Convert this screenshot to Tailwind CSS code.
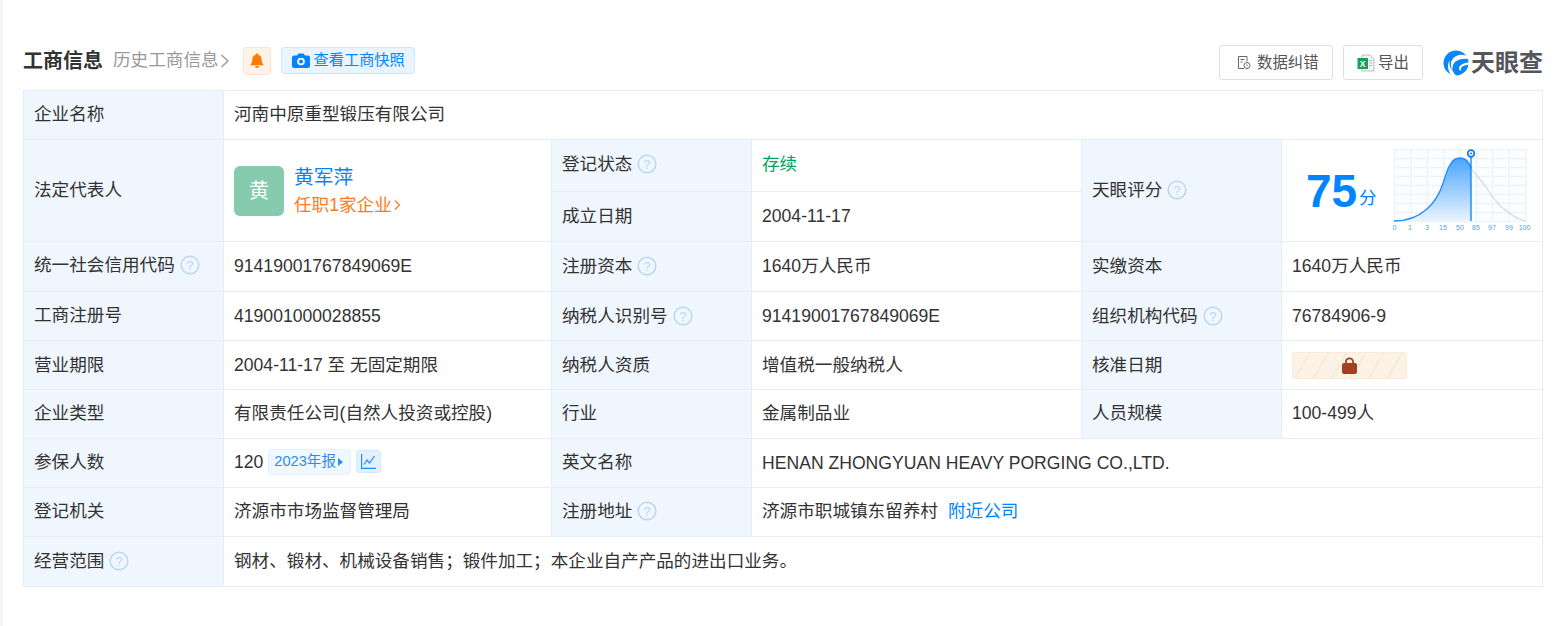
<!DOCTYPE html>
<html lang="zh-CN">
  <head>
    <meta charset="UTF-8" />
    <title>工商信息</title>
    <script src="https://cdn.jsdelivr.net/npm/@tailwindcss/browser@4"></script>
  </head>
  <body class="bg-white font-['Liberation_Sans','Noto_Sans_CJK_SC',sans-serif] text-[17.6px] text-[#333]">
    <div class="h-[626px] overflow-hidden border-l-[3px] border-[#f5f5f5] pl-[20px] pr-[18px] pt-[44px]">
      <!-- header -->
      <div class="flex items-center justify-between h-[37px] mb-[9px]">
        <div class="flex items-center mb-[4px]">
          <span class="text-[20px] font-bold text-[#333]">工商信息</span>
          <span class="ml-[10px] text-[#999]">历史工商信息</span>
          <svg class="ml-[1px]" width="10" height="16" viewBox="0 0 10 16" fill="none" stroke="#999" stroke-width="1.4"><path d="M1.5 2l6.5 6-6.5 6"/></svg>
          <div class="ml-[13px] w-[28px] h-[28px] flex items-center justify-center rounded-[3px] bg-[#fff3e8] border border-[#ffe3cf]">
            <svg width="14" height="15" viewBox="0 0 14 15" fill="#ff7a00"><path d="M7 0.5c.8 0 1.3.5 1.3 1.2C10.500 2.300 11.600 4 11.600 6.200c0 2.600.5 3.900 1.900 5.300v.8H.5v-.8C1.900 10.100 2.400 8.800 2.400 6.200 2.400 4 3.500 2.300 5.700 1.700 5.700 1 6.200.5 7 .5z"/><path d="M5 13h4a2 2 0 0 1-4 0z"/></svg>
          </div>
          <div class="ml-[10px] h-[27px] w-[134px] flex items-center pl-[10px] rounded-[3px] bg-[#e9f4ff] border border-[#cfe6ff] text-[15.2px] text-[#0084ff]">
            <svg width="18" height="15" viewBox="0 0 18 15"><path fill="#0084ff" d="M2 2.500h3L6.500.5h5L13 2.500h3a2 2 0 0 1 2 2V13a2 2 0 0 1-2 2H2a2 2 0 0 1-2-2V4.500a2 2 0 0 1 2-2z"/><circle cx="9" cy="8.500" r="3.800" fill="#fff"/><circle cx="9" cy="8.500" r="2" fill="#0084ff"/></svg>
            <span class="ml-[4px]">查看工商快照</span>
          </div>
        </div>
        <div class="flex items-center">
          <div class="w-[114px] h-[35px] flex items-center pl-[17px] rounded-[3px] border border-[#dddfe3] text-[15.4px] text-[#555]">
            <svg width="14" height="15" viewBox="0 0 14 15" fill="none" stroke="#666" stroke-width="1"><path d="M7 13.500H1.500v-12h8.500v5"/><path d="M3.500 4.500h4M3.500 7h2"/><circle cx="10" cy="10.500" r="3"/><path d="M10 9.500v1.500M10 12v.2"/></svg>
            <span class="ml-[6px]">数据纠错</span>
          </div>
          <div class="ml-[10px] w-[80px] h-[35px] flex items-center pl-[13px] rounded-[3px] border border-[#dddfe3] text-[15.4px] text-[#555]">
            <svg width="18" height="18" viewBox="0 0 18 18"><path d="M5 1h8l4 4v12H5z" fill="#f4f5f6" stroke="#b9bec4"/><path d="M12 6.500h3.500M12 9h3.500M12 11.500h3.500" stroke="#b9bec4"/><rect x="0.500" y="4" width="10.500" height="11" fill="#1d9d5b"/><text x="5.700" y="12.700" text-anchor="middle" font-size="8.500" font-weight="700" fill="#fff">X</text></svg>
            <span class="ml-[3px]">导出</span>
          </div>
          <div class="ml-[20px] w-[100px] flex items-center">
            <svg width="26" height="26" viewBox="0 0 26 26"><circle cx="13" cy="13" r="12.500" fill="#0a87f5"/><path d="M26 7C19 2.500 11 5 8.500 11 6.800 15.500 8.500 21.500 13.500 26c-2 .3-3.500 0-4.500-.5C5 22 3.800 15 6.500 10.500 6 15 7.200 18 9.500 20.500 8.500 13 14 7.500 26 9z" fill="#fff"/><path d="M26 12.500c-4 0-8 1.500-9.800 4.500-1 2 0 3.500 2.300 3.700C16.500 18.500 18.500 15.500 26 14.500z" fill="#fff"/></svg>
            <span class="ml-[2px] text-[24px] leading-none font-bold text-[#53565c]">天眼查</span>
          </div>
        </div>
      </div>

      <!-- table -->
      <table class="table-fixed w-[1520px] border-collapse">
        <colgroup>
          <col class="w-[200px]" /><col class="w-[328px]" /><col class="w-[200px]" /><col class="w-[330px]" /><col class="w-[200px]" /><col class="w-[261px]" />
        </colgroup>
        <tbody>
          <tr class="h-[49px]">
            <td class="border border-[#e4eef6] bg-[#eff6fd] px-[10px] pb-[2px]">企业名称</td>
            <td colspan="5" class="border border-[#e4eef6] px-[10px] pb-[2px]">河南中原重型锻压有限公司</td>
          </tr>
          <tr class="h-[52px]">
            <td rowspan="2" class="border border-[#e4eef6] bg-[#eff6fd] px-[10px]">法定代表人</td>
            <td rowspan="2" class="border border-[#e4eef6] px-[10px]">
              <div class="flex items-center">
                <div class="w-[50px] h-[50px] rounded-[6px] bg-[#86cbad] flex items-center justify-center text-[20px] text-white">黄</div>
                <div class="ml-[10px]">
                  <div class="text-[19.800px] leading-[26px] text-[#0084ff]">黄军萍</div>
                  <div class="mt-[3px] flex items-center leading-[24px] text-[#ff7a1a]">任职1家企业
                    <svg class="ml-[2px]" width="7" height="12" viewBox="0 0 7 12" fill="none" stroke="#ff7a1a" stroke-width="1.200"><path d="M1 1.500l4.500 4.500-4.500 4.500"/></svg>
                  </div>
                </div>
              </div>
            </td>
            <td class="border border-[#e4eef6] bg-[#eff6fd] px-[10px] pb-[2px]">
              <div class="flex items-center">登记状态
                <svg class="ml-[5px]" width="20" height="20" viewBox="0 0 20 20"><circle cx="10" cy="10" r="8.800" fill="none" stroke="#b9d7f1" stroke-width="1.500"/><text x="10" y="14.500" text-anchor="middle" font-size="12.500" fill="#b9d7f1">?</text></svg>
              </div>
            </td>
            <td class="border border-[#e4eef6] px-[10px] pb-[2px] text-[#00a35c]">存续</td>
            <td rowspan="2" class="border border-[#e4eef6] bg-[#eff6fd] px-[10px]">
              <div class="flex items-center">天眼评分
                <svg class="ml-[5px]" width="20" height="20" viewBox="0 0 20 20"><circle cx="10" cy="10" r="8.800" fill="none" stroke="#b9d7f1" stroke-width="1.500"/><text x="10" y="14.500" text-anchor="middle" font-size="12.500" fill="#b9d7f1">?</text></svg>
              </div>
            </td>
            <td rowspan="2" class="border border-[#e4eef6] pl-[24px]">
              <div class="flex items-center">
                <span class="w-[53px] text-[46px] leading-none font-bold text-[#0084ff]">75</span>
                <span class="mt-[16px] text-[#0084ff]">分</span>
                <svg class="ml-[17px] overflow-visible" width="136" height="84" viewBox="0 0 136 84">
                  <defs>
                    <linearGradient id="fillArea" x1="0" y1="0" x2="0" y2="1"><stop offset="0" stop-color="#4aa5ff"/><stop offset="1" stop-color="#eaf4ff"/></linearGradient>
                  </defs>
                  <rect x="0.500" y="0.500" width="131.500" height="72" fill="#fcfdff" stroke="#ebf2fa" stroke-width="1.300"/>
                  <path d="M17 0.500v72M33.500 0.500v72M50 0.500v72M66 0.500v72M82.500 0.500v72M98.500 0.500v72M115 0.500v72M0 9.500h132M0 18.500h132M0 27.500h132M0 36.500h132M0 45.500h132M0 54.500h132M0 63.500h132" stroke="#ebf2fa" stroke-width="1.300" fill="none"/>
                  <path d="M77 19C81 25 87 31 92 38 97 46 102 54 110 60 117 66 124 71 132 72" fill="none" stroke="#ced9e3" stroke-width="1.200"/>
                  <path d="M0 72C14 72 24 68 33 60 41 53 46 44 49.500 33 54 17 58 9 66 9 71 9 75 13 77 19V72z" fill="url(#fillArea)"/>
                  <path d="M0 72C14 72 24 68 33 60 41 53 46 44 49.500 33 54 17 58 9 66 9 71 9 75 13 77 19" fill="none" stroke="#1a8cff" stroke-width="1.300"/>
                  <path d="M77 8V72" stroke="#0d7fec" stroke-width="1.300"/>
                  <circle cx="77" cy="4.500" r="3.300" fill="#fff" stroke="#0d7fec" stroke-width="1.700"/>
                  <circle cx="77" cy="4.500" r="1.100" fill="#0d7fec"/>
                  <g font-size="7" fill="#4f9ff0" text-anchor="middle">
                    <text x="0.500" y="80.500">0</text><text x="16" y="80.500">1</text><text x="33" y="80.500">3</text><text x="49" y="80.500">15</text><text x="66" y="80.500">50</text><text x="82" y="80.500">85</text><text x="98" y="80.500">97</text><text x="115" y="80.500">99</text><text x="130.500" y="80.500">100</text>
                  </g>
                </svg>
              </div>
            </td>
          </tr>
          <tr class="h-[50px]">
            <td class="border border-[#e4eef6] bg-[#eff6fd] px-[10px]">成立日期</td>
            <td class="border border-[#e4eef6] px-[10px]">2004-11-17</td>
          </tr>
          <tr class="h-[50px]">
            <td class="border border-[#e4eef6] bg-[#eff6fd] px-[10px] pb-[2px]">
              <div class="flex items-center">统一社会信用代码
                <svg class="ml-[5px]" width="20" height="20" viewBox="0 0 20 20"><circle cx="10" cy="10" r="8.800" fill="none" stroke="#b9d7f1" stroke-width="1.500"/><text x="10" y="14.500" text-anchor="middle" font-size="12.500" fill="#b9d7f1">?</text></svg>
              </div>
            </td>
            <td class="border border-[#e4eef6] px-[10px]">91419001767849069E</td>
            <td class="border border-[#e4eef6] bg-[#eff6fd] px-[10px]">
              <div class="flex items-center">注册资本
                <svg class="ml-[5px]" width="20" height="20" viewBox="0 0 20 20"><circle cx="10" cy="10" r="8.800" fill="none" stroke="#b9d7f1" stroke-width="1.500"/><text x="10" y="14.500" text-anchor="middle" font-size="12.500" fill="#b9d7f1">?</text></svg>
              </div>
            </td>
            <td class="border border-[#e4eef6] px-[10px]">1640万人民币</td>
            <td class="border border-[#e4eef6] bg-[#eff6fd] px-[10px]">实缴资本</td>
            <td class="border border-[#e4eef6] px-[10px]">1640万人民币</td>
          </tr>
          <tr class="h-[49px]">
            <td class="border border-[#e4eef6] bg-[#eff6fd] px-[10px] pb-[2px]">工商注册号</td>
            <td class="border border-[#e4eef6] px-[10px]">419001000028855</td>
            <td class="border border-[#e4eef6] bg-[#eff6fd] px-[10px]">
              <div class="flex items-center">纳税人识别号
                <svg class="ml-[5px]" width="20" height="20" viewBox="0 0 20 20"><circle cx="10" cy="10" r="8.800" fill="none" stroke="#b9d7f1" stroke-width="1.500"/><text x="10" y="14.500" text-anchor="middle" font-size="12.500" fill="#b9d7f1">?</text></svg>
              </div>
            </td>
            <td class="border border-[#e4eef6] px-[10px]">91419001767849069E</td>
            <td class="border border-[#e4eef6] bg-[#eff6fd] px-[10px]">
              <div class="flex items-center">组织机构代码
                <svg class="ml-[5px]" width="20" height="20" viewBox="0 0 20 20"><circle cx="10" cy="10" r="8.800" fill="none" stroke="#b9d7f1" stroke-width="1.500"/><text x="10" y="14.500" text-anchor="middle" font-size="12.500" fill="#b9d7f1">?</text></svg>
              </div>
            </td>
            <td class="border border-[#e4eef6] px-[10px]">76784906-9</td>
          </tr>
          <tr class="h-[49px]">
            <td class="border border-[#e4eef6] bg-[#eff6fd] px-[10px]">营业期限</td>
            <td class="border border-[#e4eef6] px-[10px]">2004-11-17 至 无固定期限</td>
            <td class="border border-[#e4eef6] bg-[#eff6fd] px-[10px]">纳税人资质</td>
            <td class="border border-[#e4eef6] px-[10px]">增值税一般纳税人</td>
            <td class="border border-[#e4eef6] bg-[#eff6fd] px-[10px]">核准日期</td>
            <td class="border border-[#e4eef6] px-[10px]">
              <div class="w-[115px] h-[27px] flex items-center justify-center rounded-[3px] border border-[#fbeadb] bg-[#fcf2e6] bg-[repeating-linear-gradient(120deg,#fcf2e6_0px,#fcf2e6_13px,#f8ecde_13px,#f8ecde_16px)]">
                <svg width="15" height="17" viewBox="0 0 15 17" fill="#a33f22"><path d="M3 7V5a4.500 4.500 0 0 1 9 0v2h-1.800V5a2.700 2.700 0 0 0-5.400 0v2z"/><rect x="0" y="6" width="15" height="11" rx="2"/></svg>
              </div>
            </td>
          </tr>
          <tr class="h-[49px]">
            <td class="border border-[#e4eef6] bg-[#eff6fd] px-[10px] pb-[2px]">企业类型</td>
            <td class="border border-[#e4eef6] px-[10px] pb-[2px]">有限责任公司(自然人投资或控股)</td>
            <td class="border border-[#e4eef6] bg-[#eff6fd] px-[10px] pb-[2px]">行业</td>
            <td class="border border-[#e4eef6] px-[10px] pb-[2px]">金属制品业</td>
            <td class="border border-[#e4eef6] bg-[#eff6fd] px-[10px] pb-[2px]">人员规模</td>
            <td class="border border-[#e4eef6] px-[10px] pb-[2px]">100-499人</td>
          </tr>
          <tr class="h-[49px]">
            <td class="border border-[#e4eef6] bg-[#eff6fd] px-[10px] pb-[2px]">参保人数</td>
            <td class="border border-[#e4eef6] px-[10px] pb-[2px]">
              <div class="flex items-center">120
                <div class="ml-[5px] w-[83px] h-[26px] flex items-center pl-[5px] rounded-[3px] bg-[#f0f8ff] border border-[#e6f2ff] text-[14.6px] text-[#2b8cf0]">2023年报
                  <svg class="ml-[2px]" width="5" height="8" viewBox="0 0 5 8" fill="#2b8cf0"><path d="M0 0l5 4-5 4z"/></svg>
                </div>
                <div class="ml-[5px] w-[25px] h-[23px] flex items-center justify-center rounded-[3px] bg-[#e2f0ff] border border-[#d6e9ff]">
                  <svg width="15" height="15" viewBox="0 0 15 15" fill="none" stroke="#2b8cf0" stroke-width="1.200"><path d="M.6 0v14.400H15"/><path d="M3 10.500l3-4.500 2.500 3L13.500 2"/></svg>
                </div>
              </div>
            </td>
            <td class="border border-[#e4eef6] bg-[#eff6fd] px-[10px] pb-[2px]">英文名称</td>
            <td colspan="3" class="border border-[#e4eef6] px-[10px]">HENAN ZHONGYUAN HEAVY PORGING CO.,LTD.</td>
          </tr>
          <tr class="h-[49px]">
            <td class="border border-[#e4eef6] bg-[#eff6fd] px-[10px] pb-[2px]">登记机关</td>
            <td class="border border-[#e4eef6] px-[10px] pb-[2px]">济源市市场监督管理局</td>
            <td class="border border-[#e4eef6] bg-[#eff6fd] px-[10px] pb-[2px]">
              <div class="flex items-center">注册地址
                <svg class="ml-[5px]" width="20" height="20" viewBox="0 0 20 20"><circle cx="10" cy="10" r="8.800" fill="none" stroke="#b9d7f1" stroke-width="1.500"/><text x="10" y="14.500" text-anchor="middle" font-size="12.500" fill="#b9d7f1">?</text></svg>
              </div>
            </td>
            <td colspan="3" class="border border-[#e4eef6] px-[10px] pb-[2px]">济源市职城镇东留养村<span class="ml-[10px] text-[#0084ff]">附近公司</span></td>
          </tr>
          <tr class="h-[50px]">
            <td class="border border-[#e4eef6] bg-[#eff6fd] px-[10px]">
              <div class="flex items-center">经营范围
                <svg class="ml-[5px]" width="20" height="20" viewBox="0 0 20 20"><circle cx="10" cy="10" r="8.800" fill="none" stroke="#b9d7f1" stroke-width="1.500"/><text x="10" y="14.500" text-anchor="middle" font-size="12.500" fill="#b9d7f1">?</text></svg>
              </div>
            </td>
            <td colspan="5" class="border border-[#e4eef6] px-[10px]">钢材、锻材、机械设备销售；锻件加工；本企业自产产品的进出口业务。</td>
          </tr>
        </tbody>
      </table>
    </div>
  </body>
</html>
